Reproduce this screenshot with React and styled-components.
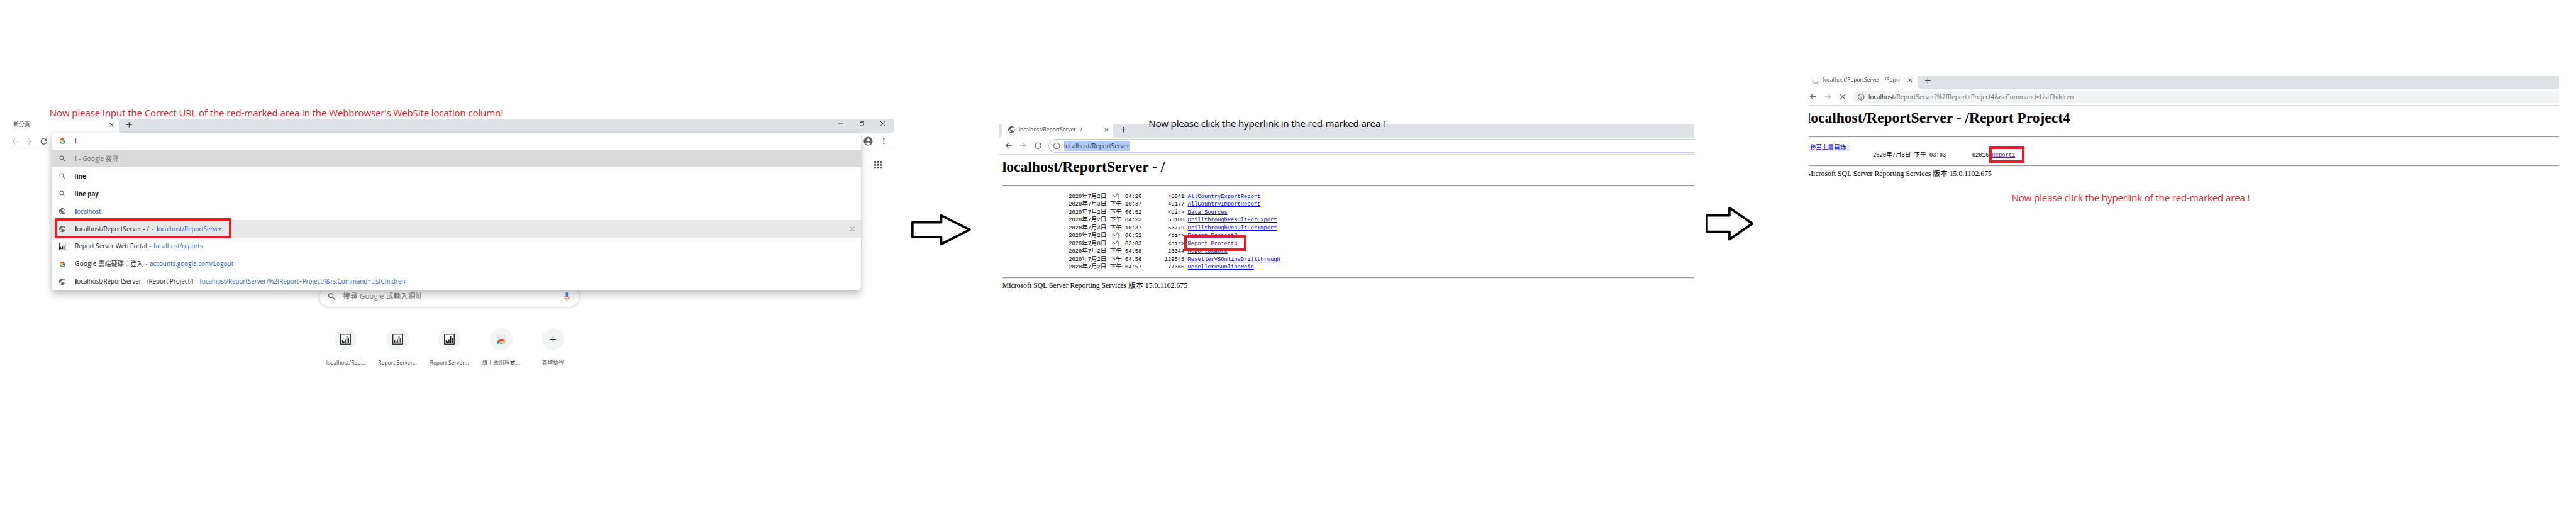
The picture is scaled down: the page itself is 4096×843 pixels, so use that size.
import React, { useLayoutEffect, useRef } from "react";
import styled, { createGlobalStyle, css } from "styled-components";
import {
  MdPublic, MdSearch, MdRefresh, MdArrowBack, MdArrowForward, MdInfoOutline,
  MdAccountCircle, MdMoreVert, MdApps, MdClose, MdAdd,
} from "react-icons/md";
import { FcGoogle } from "react-icons/fc";

/* The board is 5560 units wide and always fills the window. */
const BOARD = 5560;
const u = (n) => `${(n * 100) / BOARD}vw`;

const SANS = `"Open Sans", "Noto Sans CJK TC", sans-serif`;
const SERIF = `"Liberation Serif", "Noto Sans CJK TC", serif`;
const MONO = `"Liberation Mono", "Noto Sans CJK TC", monospace`;
const RED = "#ed1c24";

const GlobalStyle = createGlobalStyle`
  html, body { margin: 0; background: #fff; overflow: hidden; }
  *, *::before, *::after { box-sizing: border-box; }
`;

const Board = styled.main`
  display: flex;
  align-items: flex-start;
  width: 100vw;
  height: ${u(1144)};
  overflow: hidden;
  background: #fff;
  font-family: ${SANS};
`;

/* ---------- text fitted to a given width ---------- */
const Run = styled.span`
  white-space: pre;
  flex: none;
`;

function Fit({ w, children }) {
  const ref = useRef(null);
  useLayoutEffect(() => {
    const el = ref.current;
    el.style.letterSpacing = "0px";
    const target = (w * window.innerWidth) / BOARD;
    const natural = el.getBoundingClientRect().width;
    el.style.letterSpacing = `${(target - natural) / el.textContent.length}px`;
  }, [w, children]);
  return <Run ref={ref}>{children}</Run>;
}

/* ---------- shared parts ---------- */
const Step = styled.section`
  position: relative;
  flex: none;
  width: ${(p) => u(p.$width)};
  margin-left: ${(p) => u(p.$gap)};
  padding-top: ${(p) => u(p.$top)};
`;

const Caption = styled.h2`
  display: flex;
  margin: 0;
  font-size: ${u(20.6)};
  font-weight: 400;
  line-height: ${u(28)};
  color: ${(p) => p.$color};
`;

const FirstCaption = styled(Caption)`
  height: ${u(27)};
  padding-left: ${u(81)};
`;

const OverCaption = styled(Caption)`
  position: absolute;
  z-index: 2;
  left: ${u(323)};
  top: ${u(252)};
`;

const LastCaption = styled(Caption)`
  margin: ${u(23)} 0 0 ${u(438)};
`;

const TabStrip = styled.div`
  display: flex;
  height: ${(p) => u(p.$height)};
  background: #fff;
  & > * { padding-bottom: ${(p) => u(p.$lift)}; }
`;

const StripEdge = styled.div`
  width: ${u(7)};
  background: #dee1e6;
  border-bottom-right-radius: ${u(6)};
`;

const Tab = styled.div`
  display: flex;
  align-items: center;
  flex: none;
  width: ${(p) => u(p.$width)};
  padding-left: ${(p) => u(p.$inset)};
  padding-right: ${u(8)};
  font-size: ${u(11.6)};
  color: #45494d;
`;

const TabTitle = styled.div`
  flex: 1;
  display: flex;
  margin-right: ${u(5)};
  padding-left: ${(p) => u(p.$pad || 0)};
  line-height: ${u(18)};
  ${(p) => p.$fade && css`
    mask-image: linear-gradient(to right, #000 86%, rgba(0, 0, 0, 0.15) 99%);
  `}
`;

const StripRest = styled.div`
  display: flex;
  align-items: center;
  flex: 1;
  padding-left: ${u(12)};
  background: #dee1e6;
  border-bottom-left-radius: ${u(7)};
`;

const Toolbar = styled.div`
  display: flex;
  align-items: center;
  height: ${u(37)};
  padding-left: ${(p) => u(p.$pad)};
  border-bottom: ${u(1)} solid #d9dadc;
`;

const Icon = styled.span`
  display: flex;
  align-items: center;
  justify-content: center;
  flex: none;
  width: ${(p) => u(p.$box || p.$size)};
  height: ${(p) => u(p.$size)};
  color: ${(p) => p.$color || "#5f6368"};
  & > svg {
    display: block;
    flex: none;
    width: ${(p) => u(p.$size)};
    height: ${(p) => u(p.$size)};
  }
`;

const Highlight = styled.span`
  position: absolute;
  z-index: 1;
  left: ${(p) => u(p.$x)};
  top: ${(p) => u(p.$y)};
  width: ${(p) => u(p.$w)};
  height: ${(p) => u(p.$h)};
  border: ${u(5.5)} solid ${RED};
`;

/* ---------- drawings ---------- */
const ReportGlyph = () => (
  <svg viewBox="0 0 16 16">
    <rect x=".7" y=".7" width="14.6" height="14.6" fill="#fff" stroke="#111" strokeWidth="1.2" />
    <path d="M3.3 13.5V9M5.4 13.5v-2M7.5 13.5V8M10 13.5V3.5M12.4 13.5V6" stroke="#111" strokeWidth="1.5" fill="none" />
  </svg>
);

const StoreGlyph = () => (
  <svg viewBox="0 0 20 20">
    <path d="M0 0h20v10H0z" fill="#e4e5e6" />
    <path d="M5 2h10v1.500H5zM6 5h8v1.500H6z" fill="#fff" />
    <path d="M0 10h20v10H0z" fill="#eeeff0" />
    <path d="M.5 20a10 10 0 0 1 2.200-7L6 20z" fill="#1da362" />
    <path d="M2.500 13.200a9.500 9.500 0 0 1 15.500 0l-8 1.300a5 5 0 0 0-4.600 3.800z" fill="#db4437" />
    <path d="M10 14.200h8.500a10 10 0 0 1 1 5.800H14z" fill="#ffcd40" />
    <path d="M5.800 20a4.200 4.200 0 0 1 8.400 0z" fill="#f1f1f1" />
    <path d="M6.600 20a3.400 3.400 0 0 1 6.800 0z" fill="#4587f3" />
  </svg>
);

const MicGlyph = () => (
  <svg viewBox="0 0 20 20">
    <rect x="7.500" y="1" width="5" height="11.500" rx="2.200" fill="#4285f4" />
    <path d="M4.700 10c0 1.700.7 3 1.700 3.900" stroke="#fbbc04" strokeWidth="1.700" fill="none" />
    <path d="M6.300 13.700c2 1.900 5.400 1.900 7.400 0 1-.9 1.600-2.200 1.600-3.700" stroke="#ea4335" strokeWidth="1.700" fill="none" />
    <path d="M10 16V19" stroke="#34a853" strokeWidth="2" />
  </svg>
);

const SpinnerGlyph = () => (
  <svg viewBox="0 0 16 16">
    <path d="M1 6.500a7 7 0 1 0 14 0" stroke="#9b9ea2" strokeWidth="1.500" fill="none" />
  </svg>
);

const MinimizeGlyph = () => (
  <svg viewBox="0 0 10 10"><path d="M0 5.500h10" stroke="#000" strokeWidth="1.200" /></svg>
);
const RestoreGlyph = () => (
  <svg viewBox="0 0 10 10">
    <path d="M.5 2.500h7v7h-7zM2.500 2.500v-2h7v7h-2" fill="none" stroke="#000" />
  </svg>
);
const ExitGlyph = () => (
  <svg viewBox="0 0 10 10"><path d="M0 0l10 10M10 0L0 10" stroke="#000" /></svg>
);

const ArrowBox = styled.div`
  flex: none;
  width: ${(p) => u(p.$w)};
  height: ${(p) => u(p.$h)};
  margin: ${(p) => u(p.$top)} 0 0 ${(p) => u(p.$gap)};
  & > svg { display: block; width: 100%; height: 100%; }
`;

const StepArrow = ({ w, h, neck, shaft, top, gap }) => {
  const a = (h - shaft) / 2;
  return (
    <ArrowBox $w={w} $h={h} $top={top} $gap={gap}>
      <svg viewBox={`0 0 ${w} ${h}`}>
        <path
          d={`M2.500 ${a + 2.5}H${neck}V3.500L${w - 3} ${h / 2}L${neck} ${h - 3.5}V${h - a - 2.5}H2.500Z`}
          fill="#fff" stroke="#000" strokeWidth="5" strokeLinejoin="round"
        />
      </svg>
    </ArrowBox>
  );
};

/* ---------- step 1: address bar with suggestions ---------- */
const WindowControls = styled.div`
  display: flex;
  gap: ${u(36)};
  margin: 0 ${u(18)} ${u(4)} auto;
`;

const NavIcons = styled.div`
  display: flex;
  align-items: center;
  gap: ${u(16)};
`;

const ToolbarEnd = styled.div`
  display: flex;
  align-items: center;
  gap: ${u(11)};
  margin-left: auto;
  padding-right: ${u(12)};
`;

const Suggestions = styled.div`
  position: absolute;
  z-index: 1;
  left: ${u(85)};
  top: ${u(287)};
  width: ${u(1748)};
  border-radius: ${u(8)};
  background: #fff;
  box-shadow: 0 ${u(9)} ${u(16)} rgba(20, 28, 30, 0.24), 0 0 ${u(8)} rgba(0, 0, 0, 0.08);
`;

const Suggestion = styled.div`
  position: relative;
  display: flex;
  align-items: center;
  height: ${(p) => u(p.$height || 38)};
  padding: 0 ${u(11.5)} 0 ${u(15)};
  background: ${(p) => p.$bg || "transparent"};
  font-size: ${u(13.4)};
  line-height: ${u(20)};
  color: ${(p) => p.$color || "#202124"};
  & > span:first-child { margin-right: ${u(18)}; }
`;

const Url = styled.span`
  color: #3060c5;
`;

const Dash = styled.span`
  flex: none;
  width: ${(p) => u(p.$w || 15)};
  text-align: center;
  color: #6b6e72;
`;

const RowClose = styled.span`
  margin-left: auto;
`;

const NewTabPage = styled.div`
  display: flex;
  flex-direction: column;
  align-items: center;
`;

const AppsLine = styled.div`
  display: flex;
  justify-content: flex-end;
  align-self: stretch;
  padding: ${u(19.5)} ${u(21.5)} 0 0;
`;

const SearchPill = styled.div`
  display: flex;
  align-items: center;
  width: ${u(561)};
  height: ${u(44)};
  margin: ${u(249.5)} ${u(15)} 0 0;
  padding: 0 ${u(17)};
  border-radius: ${u(22)};
  background: #fff;
  box-shadow: 0 ${u(1)} ${u(6)} rgba(32, 33, 36, 0.3);
  font-size: ${u(15.4)};
  line-height: ${u(22)};
  color: #757575;
  & > :last-child { margin-left: auto; }
`;

const PillText = styled.div`
  display: flex;
  padding-left: ${u(13)};
`;

const Shortcuts = styled.div`
  display: flex;
  margin: ${u(46)} ${u(15)} 0 0;
`;

const Shortcut = styled.div`
  display: flex;
  flex-direction: column;
  align-items: center;
  gap: ${u(19.5)};
  width: ${u(112)};
  font-size: ${u(11.6)};
  line-height: ${u(18)};
  color: #3c4043;
`;

const Disc = styled.div`
  display: flex;
  align-items: center;
  justify-content: center;
  width: ${u(48)};
  height: ${u(48)};
  border-radius: 50%;
  background: #f1f3f4;
`;

const suggestions = [
  { icon: "search", bg: "#dadada", color: "#6a6a6a", w: 94, text: "l - Google 搜尋" },
  { icon: "search", w: 23.5, text: <>l<b>ine</b></> },
  { icon: "search", w: 51, text: <>l<b>ine pay</b></> },
  { icon: "globe", url: <><b>l</b>ocalhost</>, urlW: 56 },
  {
    icon: "globe", bg: "#e8e8e8", text: <><b>l</b>ocalhost/ReportServer - /</>, w: 159.5, dash: 16,
    url: <><b>l</b>ocalhost/ReportServer</>, urlW: 141, marked: true,
  },
  { icon: "report", text: "Report Server Web Portal", w: 155, url: <><b>l</b>ocalhost/reports</>, urlW: 105.5 },
  { icon: "google", text: "Google 雲端硬碟：登入", w: 147, dash: 14, url: <>accounts.google.com/<b>L</b>ogout</>, urlW: 181 },
  {
    icon: "globe", text: <><b>l</b>ocalhost/ReportServer - /Report Project4</>, w: 255.5, dash: 14,
    url: <><b>l</b>ocalhost/ReportServer?%2fReport+Project4&amp;rs:Command=ListChildren</>, urlW: 443,
  },
];

const rowIcons = {
  search: <Icon $size={17} $box={18}><MdSearch /></Icon>,
  globe: <Icon $size={16.6} $box={18}><MdPublic /></Icon>,
  report: <Icon $size={16} $box={18}><ReportGlyph /></Icon>,
  google: <Icon $size={14.5} $box={18}><FcGoogle /></Icon>,
};

const shortcuts = [
  { glyph: <Icon $size={23}><ReportGlyph /></Icon>, label: "localhost/Rep...", w: 84 },
  { glyph: <Icon $size={23}><ReportGlyph /></Icon>, label: "Report Server...", w: 84 },
  { glyph: <Icon $size={23}><ReportGlyph /></Icon>, label: "Report Server...", w: 84 },
  { glyph: <Icon $size={20}><StoreGlyph /></Icon>, label: "線上應用程式...", w: 82 },
  { glyph: <Icon $size={20.5} $color="#202124"><MdAdd /></Icon>, label: "新增捷徑", w: 48 },
];

const AddressStep = () => (
  <Step $width={1903} $gap={26} $top={229}>
    <FirstCaption $color={RED}>
      <Fit w={979}>Now please Input the Correct URL of the red-marked area in the Webbrowser's WebSite location column!</Fit>
    </FirstCaption>
    <TabStrip $height={31} $lift={4}>
      <Tab $width={231} $inset={3}>
        <TabTitle><Fit w={36}>新分頁</Fit></TabTitle>
        <Icon $size={15} $color="#3c4043"><MdClose /></Icon>
      </Tab>
      <StripRest>
        <Icon $size={20} $color="#3c4043"><MdAdd /></Icon>
        <WindowControls>
          <Icon $size={10}><MinimizeGlyph /></Icon>
          <Icon $size={10}><RestoreGlyph /></Icon>
          <Icon $size={10}><ExitGlyph /></Icon>
        </WindowControls>
      </StripRest>
    </TabStrip>
    <Toolbar $pad={0}>
      <NavIcons>
        <Icon $size={19} $box={12} $color="#bcbec0"><MdArrowBack /></Icon>
        <Icon $size={21} $box={17} $color="#bcbec0"><MdArrowForward /></Icon>
        <Icon $size={21} $box={16}><MdRefresh /></Icon>
      </NavIcons>
      <ToolbarEnd>
        <Icon $size={23}><MdAccountCircle /></Icon>
        <Icon $size={20}><MdMoreVert /></Icon>
      </ToolbarEnd>
    </Toolbar>
    <NewTabPage>
      <AppsLine><Icon $size={25}><MdApps /></Icon></AppsLine>
      <SearchPill>
        <Icon $size={21}><MdSearch /></Icon>
        <PillText><Fit w={172}>搜尋 Google 或輸入網址</Fit></PillText>
        <Icon $size={20}><MicGlyph /></Icon>
      </SearchPill>
      <Shortcuts>
        {shortcuts.map((s, i) => (
          <Shortcut key={i}>
            <Disc>{s.glyph}</Disc>
            <Fit w={s.w}>{s.label}</Fit>
          </Shortcut>
        ))}
      </Shortcuts>
    </NewTabPage>
    <Suggestions>
      <Suggestion $height={36}>
        {rowIcons.google}
        <span>l</span>
      </Suggestion>
      {suggestions.map((s, i) => (
        <Suggestion key={i} $bg={s.bg} $color={s.color}>
          {rowIcons[s.icon]}
          {s.text && <Fit w={s.w}>{s.text}</Fit>}
          {s.text && s.url && <Dash $w={s.dash}>-</Dash>}
          {s.url && <Url><Fit w={s.urlW}>{s.url}</Fit></Url>}
          {s.marked && (
            <>
              <RowClose><Icon $size={17} $color="#9a9a9a"><MdClose /></Icon></RowClose>
              <Highlight $x={7} $y={-4} $w={382} $h={44} />
            </>
          )}
        </Suggestion>
      ))}
    </Suggestions>
  </Step>
);

/* ---------- steps 2 and 3: report server pages ---------- */
const ClippedWindow = styled.div`
  overflow: hidden;
`;

const LocationBar = styled.div`
  display: flex;
  align-items: center;
  flex: 1;
  height: ${(p) => u(p.$focused ? 30 : 28)};
  margin-left: ${u(14)};
  padding-left: ${(p) => u(p.$focused ? 9 : 10)};
  font-size: ${u(13.4)};
  line-height: ${u(22)};
  color: #6a6e73;
  border-radius: ${u(15)} 0 0 ${u(15)};
  background: #f1f3f4;
  ${(p) => p.$focused && css`
    background: #fff;
    border: ${u(2)} solid #b6d2f6;
    border-right: 0;
    color: #2b3440;
  `}
  & > span:first-child { margin-right: ${u(7)}; }
`;

const Host = styled.span`
  color: #202124;
`;

const SelectedText = styled.span`
  display: flex;
  background: #aecbfa;
`;

const Page = styled.div`
  padding-left: ${(p) => u(p.$inset)};
  margin-left: ${(p) => u(p.$shift || 0)};
  font-family: ${SERIF};
  color: #000;
`;

const PageTitle = styled.h1`
  display: flex;
  margin: 0;
  padding-top: ${u(8)};
  height: ${u(66)};
  font-size: ${u(32)};
  line-height: ${u(36)};
  font-weight: 700;
`;

const Rule = styled.div`
  height: ${u(2)};
  border-top: ${u(1)} solid #9a9a9a;
  border-bottom: ${u(1)} solid #ededed;
`;

const Listing = styled.div`
  padding: ${u(13.7)} 0 ${u(12.3)};
  font-family: ${MONO};
  font-size: ${u(11.91)};
`;

const Entry = styled.div`
  position: relative;
  display: flex;
  align-items: center;
  height: ${u(17)};
  line-height: ${u(17)};
  white-space: pre;
`;

const EntryDate = styled.span`
  flex: none;
  width: ${u(158)};
  margin-left: ${u(143)};
`;

const EntrySize = styled.span`
  flex: none;
  width: ${u(92)};
  margin-right: ${u(7.2)};
  text-align: right;
`;

const EntryLink = styled.span`
  color: ${(p) => (p.$visited ? "#551a8b" : "#0000ee")};
  text-decoration: underline;
  text-decoration-skip-ink: none;
  text-underline-offset: ${u(1.5)};
`;

const Han = styled.span`
  font-size: ${u(13)};
  line-height: 0;
`;

const PageFooter = styled.div`
  display: flex;
  height: ${u(24)};
  margin-top: ${u(6.6)};
  font-size: ${u(16)};
  line-height: ${u(20)};
`;

const mixed = (text) =>
  text.split(/([\u4e00-\u9fff]+)/).map((part, i) => (i % 2 ? <Han key={i}>{part}</Han> : part));

const Row = ({ date, size, name, visited, box }) => (
  <Entry>
    <EntryDate>{mixed(date)}</EntryDate>
    <EntrySize>{size}</EntrySize>
    <EntryLink $visited={visited}>{name}</EntryLink>
    {box && <Highlight $x={box.x} $y={box.y} $w={box.w} $h={box.h} />}
  </Entry>
);

const entries = [
  ["2020年7月2日 下午 04:26", "48041", "AllCountryExportReport"],
  ["2020年7月3日 下午 10:37", "49177", "AllCountryImportReport"],
  ["2020年7月2日 下午 06:52", "<dir>", "Data Sources"],
  ["2020年7月2日 下午 04:23", "53100", "DrillthroughResultForExport"],
  ["2020年7月3日 下午 10:37", "53779", "DrillthroughResultForImport"],
  ["2020年7月2日 下午 06:52", "<dir>", "Report Project3"],
  ["2020年7月8日 下午 03:03", "<dir>", "Report Project4", true],
  ["2020年7月2日 下午 04:58", "23344", "ReportOkWork"],
  ["2020年7月2日 下午 04:56", "129545", "ResellerVSOnlineDrillthrough"],
  ["2020年7月2日 下午 04:57", "77365", "ResellerVSOnlineMain"],
];

const FolderStep = () => (
  <Step $width={1501} $gap={60} $top={268}>
    <OverCaption $color="#000">
      <Fit w={511}>Now please click the hyperlink in the red-marked area !</Fit>
    </OverCaption>
    <ClippedWindow>
      <TabStrip $height={29} $lift={5}>
        <StripEdge />
        <Tab $width={240} $inset={12}>
          <Icon $size={17}><MdPublic /></Icon>
          <TabTitle $pad={7}><Fit w={137}>localhost/ReportServer - /</Fit></TabTitle>
          <Icon $size={14.5} $color="#45494d"><MdClose /></Icon>
        </Tab>
        <StripRest><Icon $size={20} $color="#3c4043"><MdAdd /></Icon></StripRest>
      </TabStrip>
      <Toolbar $pad={12.5}>
        <NavIcons>
          <Icon $size={20.5} $box={16}><MdArrowBack /></Icon>
          <Icon $size={20.5} $box={16} $color="#bcbec0"><MdArrowForward /></Icon>
          <Icon $size={21} $box={16}><MdRefresh /></Icon>
        </NavIcons>
        <LocationBar $focused>
          <Icon $size={17}><MdInfoOutline /></Icon>
          <SelectedText><Fit w={141}>localhost/ReportServer</Fit></SelectedText>
        </LocationBar>
      </Toolbar>
      <Page $inset={7.5}>
        <PageTitle><Fit w={351}>localhost/ReportServer - /</Fit></PageTitle>
        <Rule />
        <Listing>
          {entries.map(([date, size, name, marked]) => (
            <Row key={name} date={date} size={size} name={name} visited={marked}
              box={marked && { x: 392.5, y: -10.7, w: 134, h: 34 }} />
          ))}
        </Listing>
        <Rule />
        <PageFooter><Fit w={399.5}>Microsoft SQL Server Reporting Services 版本 15.0.1102.675</Fit></PageFooter>
      </Page>
    </ClippedWindow>
  </Step>
);

const ReportStep = () => (
  <Step $width={1619} $gap={119} $top={164}>
    <ClippedWindow>
      <TabStrip $height={27} $lift={7.5}>
        <Tab $width={235} $inset={7}>
          <Icon $size={17}><SpinnerGlyph /></Icon>
          <TabTitle $pad={7} $fade><Fit w={173}>localhost/ReportServer - /Report</Fit></TabTitle>
          <Icon $size={15} $color="#3c4043"><MdClose /></Icon>
        </Tab>
        <StripRest><Icon $size={20} $color="#3c4043"><MdAdd /></Icon></StripRest>
      </TabStrip>
      <Toolbar $pad={1}>
        <NavIcons>
          <Icon $size={20.5} $box={16}><MdArrowBack /></Icon>
          <Icon $size={20.5} $box={16} $color="#bcbec0"><MdArrowForward /></Icon>
          <Icon $size={21.5} $box={16}><MdClose /></Icon>
        </NavIcons>
        <LocationBar>
          <Icon $size={17}><MdInfoOutline /></Icon>
          <Fit w={443}><Host>localhost</Host>/ReportServer?%2fReport+Project4&amp;rs:Command=ListChildren</Fit>
        </LocationBar>
      </Toolbar>
      <Page $inset={0} $shift={-4.5}>
        <PageTitle><Fit w={569}>localhost/ReportServer - /Report Project4</Fit></PageTitle>
        <Rule />
        <Listing>
          <Entry><EntryLink>{mixed("[移至上層目錄]")}</EntryLink></Entry>
          <Row date="2020年7月8日 下午 03:03" size="62016" name="Report1" visited
            box={{ x: 393.5, y: -10.7, w: 76, h: 35 }} />
        </Listing>
        <Rule />
        <PageFooter><Fit w={399.5}>Microsoft SQL Server Reporting Services 版本 15.0.1102.675</Fit></PageFooter>
      </Page>
    </ClippedWindow>
    <LastCaption $color={RED}>
      <Fit w={514}>Now please click the hyperlink of the red-marked area !</Fit>
    </LastCaption>
  </Step>
);

export default function App() {
  return (
    <>
      <GlobalStyle />
      <Board>
        <AddressStep />
        <StepArrow w={129} h={69} neck={64.5} shaft={37} top={461} gap={38} />
        <FolderStep />
        <StepArrow w={104} h={75} neck={51.5} shaft={40} top={445} gap={24} />
        <ReportStep />
      </Board>
    </>
  );
}
